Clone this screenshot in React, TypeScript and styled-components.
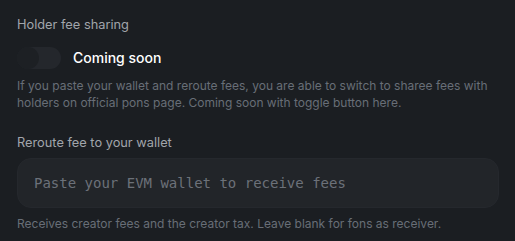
import React from "react";
import styled, { createGlobalStyle } from "styled-components";

const Global = createGlobalStyle`
  html, body { margin: 0; padding: 0; background: #1b1e22; }
  body { font-family: Inter, "Noto Sans", sans-serif; -webkit-font-smoothing: antialiased; }
`;

const Page = styled.div`
  padding: 16px 16px 0 17px;
  display: flex;
  flex-direction: column;
`;

const Section = styled.section<{ $gapTop?: number }>`
  display: flex;
  flex-direction: column;
  margin-top: ${(p) => p.$gapTop ?? 0}px;
`;

const Label = styled.div`
  font-size: 12.8px;
  line-height: 18px;
  color: #a1a5ab;
`;

const ToggleRow = styled.div`
  display: flex;
  align-items: center;
  gap: 12px;
  margin-top: 12px;
`;

const Track = styled.button`
  width: 44px;
  height: 22px;
  border-radius: 11px;
  border: none;
  padding: 0;
  background: #24272c;
  display: flex;
  align-items: center;
  cursor: not-allowed;
`;

const Knob = styled.span`
  width: 22px;
  height: 22px;
  border-radius: 50%;
  background: #1d2024;
`;

const Title = styled.span`
  font-size: 14px;
  font-weight: 500;
  color: #ffffff;
  line-height: 22px;
  margin-top: 1px;
`;

const Help = styled.p<{ $mt: number }>`
  margin: ${(p) => p.$mt}px 0 0;
  font-size: 12px;
  line-height: 17px;
  color: #686e77;
`;

const Input = styled.input`
  margin-top: 6px;
  height: 50px;
  box-sizing: border-box;
  width: 482px;
  border-radius: 14px;
  border: 1px solid #25282d;
  background: #222529;
  padding: 0 16px;
  font-family: "DejaVu Sans Mono", monospace;
  font-size: 14px;
  color: #e5e7eb;
  outline: none;
  &::placeholder { color: #6c7179; }
`;

export default function App() {
  return (
    <>
      <Global />
      <Page>
        <Section>
          <Label>Holder fee sharing</Label>
          <ToggleRow>
            <Track aria-label="toggle" disabled>
              <Knob />
            </Track>
            <Title>Coming soon</Title>
          </ToggleRow>
          <Help $mt={8}>
            If you paste your wallet and reroute fees, you are able to switch to sharee fees with
            holders on official pons page. Coming soon with toggle button here.
          </Help>
        </Section>
        <Section $gapTop={23}>
          <Label>Reroute fee to your wallet</Label>
          <Input placeholder="Paste your EVM wallet to receive fees" />
          <Help $mt={7}>Receives creator fees and the creator tax. Leave blank for fons as receiver.</Help>
        </Section>
      </Page>
    </>
  );
}
